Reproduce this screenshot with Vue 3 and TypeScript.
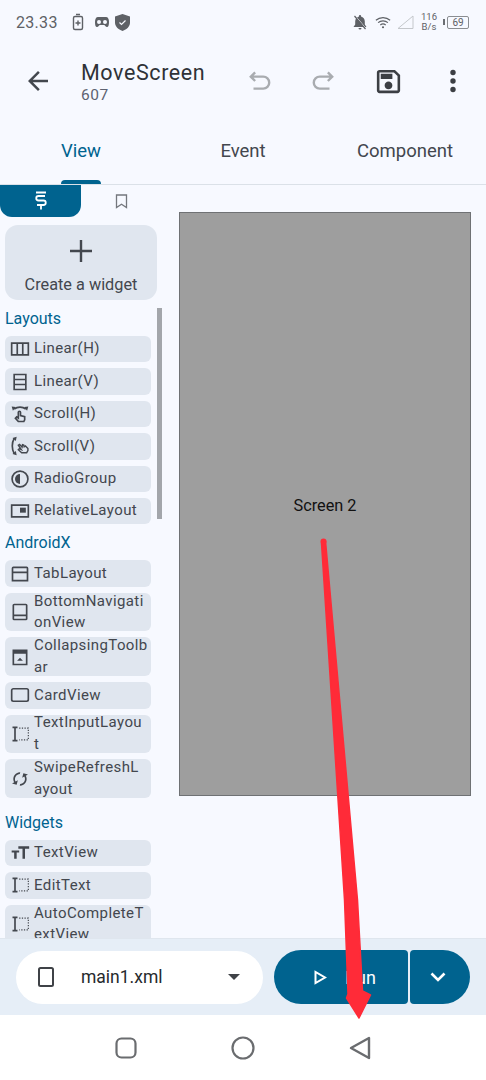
<template>
  <div class="phone">
    <div class="status">
      <span class="clock">23.33</span>
      <svg class="st" width="14" height="18" viewBox="0 0 14 18" fill="none" stroke="currentColor" stroke-width="1.4">
        <rect x="2.5" y="3.5" width="9" height="13" rx="1.5" />
        <path d="M5 1.5h4M7 7.5v5M4.5 10h5" />
      </svg>
      <svg class="st game" width="14" height="10" viewBox="0 0 14 10">
        <path fill="currentColor" fill-rule="evenodd" d="M3 0h8c2 0 3 2 3 5s-.6 5-2 5c-1.500 0-2-2-3-2H5c-1 0-1.500 2-3 2S0 8 0 5s1-5 3-5zm1 3a2 2 0 100 4 2 2 0 000-4zm6 0a2 2 0 100 4 2 2 0 000-4z" />
      </svg>
      <svg class="st" width="15" height="17" viewBox="0 0 15 17">
        <path fill="currentColor" d="M7.500 0L15 2.500v6c0 4-3.200 7-7.500 8.500C3.200 15.500 0 12.500 0 8.500v-6z" />
        <path fill="none" stroke="#f7f9ff" stroke-width="1.2" d="M4.500 8.500l2 2 4-4" />
      </svg>
      <span class="spring"></span>
      <svg width="14" height="15" viewBox="0 0 14 15">
        <path fill="currentColor" d="M7 0c.6 0 1 .4 1 1v.6c2.300.5 3.800 2.400 3.800 4.900v3L13.500 12h-13l1.700-2.500v-3c0-2.500 1.500-4.400 3.800-4.900V1c0-.6.4-1 1-1zM5.500 13h3a1.500 1.500 0 01-3 0z" />
        <path stroke="#f7f9ff" stroke-width="1" d="M2 .5l11 13" />
        <path stroke="currentColor" stroke-width="1.200" d="M1.500 1l11 13" />
      </svg>
      <svg class="wifi" width="16" height="13" viewBox="0 0 18 14" fill="none" stroke="currentColor" stroke-width="1.300">
        <path d="M1 4.500c4.500-4 11.500-4 16 0M3.500 7.200c3-2.700 8-2.700 11 0M6 9.800c1.700-1.400 4.300-1.400 6 0" />
        <circle cx="9" cy="12.300" r="1.200" fill="currentColor" stroke="none" />
      </svg>
      <svg class="signal" width="17" height="14" viewBox="0 0 17 14" fill="none" stroke="#c4c7cb" stroke-width="1">
        <path d="M1 13.500L16 1v12.500z" />
      </svg>
      <span class="speed">116<br />B/s</span>
      <span class="batt-tip"></span>
      <span class="batt">69</span>
    </div>

    <div class="toolbar">
      <svg class="back" width="30" height="30" viewBox="0 0 24 24">
        <path fill="currentColor" d="M20 11H7.830l5.590-5.590L12 4l-8 8 8 8 1.410-1.410L7.830 13H20v-2z" />
      </svg>
      <div class="titles">
        <div class="title">MoveScreen</div>
        <div class="subtitle">607</div>
      </div>
      <svg class="act undo" width="26" height="26" viewBox="0 0 24 24" fill="none" stroke="currentColor" stroke-width="2.200">
        <path d="M7.500 4L3.500 8l4 4M3.500 8H15a5.500 5.500 0 010 11H6" />
      </svg>
      <svg class="act redo" width="26" height="26" viewBox="0 0 24 24" fill="none" stroke="currentColor" stroke-width="2.200">
        <path d="M16.500 4l4 4-4 4M20.500 8H9a5.500 5.500 0 000 11h9" />
      </svg>
      <svg class="act save" width="31" height="31" viewBox="0 0 24 24">
        <path fill="currentColor" d="M17 3H5c-1.110 0-2 .9-2 2v14c0 1.100.89 2 2 2h14c1.100 0 2-.9 2-2V7l-4-4zm2 16H5V5h11.170L19 7.830V19zm-7-7c-1.660 0-3 1.340-3 3s1.340 3 3 3 3-1.340 3-3-1.340-3-3-3zM6 6h9v4H6z" />
      </svg>
      <svg class="act more" width="8" height="24" viewBox="0 0 8 24">
        <circle cx="4" cy="3.500" r="2.700" fill="currentColor" />
        <circle cx="4" cy="12" r="2.700" fill="currentColor" />
        <circle cx="4" cy="20.500" r="2.700" fill="currentColor" />
      </svg>
    </div>

    <div class="tabs">
      <div v-for="(tab, i) in tabs" :key="tab" class="tab" :class="{ active: i === 0 }">{{ tab }}</div>
    </div>

    <div class="main">
      <aside class="side">
        <div class="switch">
          <div class="switch-on">
            <svg width="14" height="20" viewBox="0 0 14 20" fill="none" stroke="currentColor" stroke-width="1.800">
              <path d="M2 1.500h10M11 5H4.500a2.200 2.200 0 000 4.500h5a2.200 2.200 0 010 4.500H3M7 14v4.500" />
            </svg>
          </div>
          <div class="switch-off">
            <svg width="13" height="15" viewBox="0 0 13 15" fill="none" stroke="currentColor" stroke-width="1.300">
              <path d="M1.500 1h10v12.500l-5-3.200-5 3.200z" />
            </svg>
          </div>
        </div>

        <div class="create">
          <svg width="24" height="24" viewBox="0 0 24 24" stroke="currentColor" stroke-width="2.400">
            <path d="M1 12h22M12 1v22" />
          </svg>
          <span>Create a widget</span>
        </div>

        <section v-for="group in groups" :key="group.name" class="group">
          <h3>{{ group.name }}</h3>
          <div v-for="item in group.items" :key="item.name" class="item" :class="{ tall: item.name.includes('\n') }">
            <svg class="ico" width="20" height="20" viewBox="0 0 24 24" v-html="icons[item.icon]"></svg>
            <span class="name">{{ item.name }}</span>
          </div>
        </section>

        <div class="scrollbar"></div>
      </aside>

      <div class="stage">
        <div class="canvas">Screen 2</div>
      </div>
    </div>

    <div class="bottom">
      <div class="picker">
        <svg width="18" height="22" viewBox="0 0 18 22" fill="none" stroke="currentColor" stroke-width="2">
          <rect x="2" y="2" width="14" height="18" rx="1.500" />
        </svg>
        <span class="file">main1.xml</span>
        <span class="caret"></span>
      </div>
      <div class="run">
        <svg width="15" height="15" viewBox="0 0 15 15" fill="none" stroke="currentColor" stroke-width="2">
          <path d="M2.500 2v11l9.500-5.500z" />
        </svg>
        <span>Run</span>
      </div>
      <div class="run-more">
        <svg width="16" height="10" viewBox="0 0 16 10" fill="none" stroke="currentColor" stroke-width="2.600">
          <path d="M1.500 1.500L8 8l6.500-6.500" />
        </svg>
      </div>
    </div>

    <div class="nav">
      <svg width="22" height="22" viewBox="0 0 22 22" fill="none" stroke="currentColor" stroke-width="2.200">
        <rect x="1.500" y="1.500" width="19" height="19" rx="5" />
      </svg>
      <svg width="24" height="24" viewBox="0 0 24 24" fill="none" stroke="currentColor" stroke-width="2.200">
        <circle cx="12" cy="12" r="10.500" />
      </svg>
      <svg width="22" height="24" viewBox="0 0 22 24" fill="none" stroke="currentColor" stroke-width="2.400" stroke-linejoin="round">
        <path d="M2 12L20 2v20z" />
      </svg>
    </div>

    <!-- annotation drawn on top of the screenshot -->
    <svg class="annotation" width="486" height="1080" viewBox="0 0 486 1080">
      <path
        d="M321.500 543L344.500 900L348 994L346.500 998L359 1018L370.500 995L362.500 991L357.500 900L325.500 541z"
        fill="#ff2b38"
        stroke="#ff2b38"
        stroke-width="1.500"
        stroke-linejoin="round"
      />
      <circle cx="323.500" cy="541.500" r="3" fill="#ff2b38" />
    </svg>
  </div>
</template>

<script setup lang="ts">
type IconName =
  | 'columns' | 'rows' | 'scrollH' | 'scrollV' | 'radio' | 'relative' | 'tab'
  | 'bottomNav' | 'toolbar' | 'card' | 'input' | 'swipe' | 'text'

interface Item {
  name: string
  icon: IconName
}

const tabs = ['View', 'Event', 'Component']

const line = 'fill="none" stroke="currentColor" stroke-width="2"'
const inputIcon = `<path ${line} d="M3 4h6M3 20h6M6 4v16" /><path fill="none" stroke="currentColor" stroke-width="1.400" stroke-dasharray="1.500 1.700" d="M11 5h11v14H11" />`

const icons: Record<IconName, string> = {
  columns: `<path ${line} d="M2 5h20v14H2zM8.700 5v14M15.300 5v14" />`,
  rows: `<path ${line} d="M5 3h14v18H5zM5 9h14M5 15h14" />`,
  scrollH: `<path ${line} d="M5 6c4-3 10-3 14 0M10 21l-3.500-4 1.500-1.500 2 1.500V10a1.300 1.300 0 012.600 0v4l5 1.200V19l-1 2z" /><path fill="currentColor" d="M2 3l5 .5L3.500 8zM22 3l-5 .5L20.500 8z" />`,
  scrollV: `<path ${line} d="M5 3C2 8 2 16 5 21" /><path fill="none" stroke="currentColor" stroke-width="1.700" d="M14 20l-4-3.500 1.300-1.300 2.200 1L10 11l1.500-1 3 3.500.5-3 1.500.5.500 2 1.500-1 3 3v2.500L20 20z" /><path fill="currentColor" d="M8 1L7 6 3 2.500zM8 23l-1-5-4 3.500z" />`,
  radio: `<circle ${line} cx="12" cy="12" r="9.500" /><path fill="currentColor" d="M12 6a6 6 0 000 12z" />`,
  relative: `<path ${line} d="M2 5h20v14H2z" /><path fill="currentColor" d="M12 8h7v6h-7z" />`,
  tab: `<path ${line} d="M4 4h16a1 1 0 011 1v15H3V5a1 1 0 011-1zM3 10h18" />`,
  bottomNav: `<path ${line} d="M5 3h14a1 1 0 011 1v16a1 1 0 01-1 1H5a1 1 0 01-1-1V4a1 1 0 011-1zM4 16h16" />`,
  toolbar: `<path ${line} d="M4 4h16v17H4z" /><path fill="currentColor" d="M4 4h16v4H4zM12 13l3.500 3.500h-7z" />`,
  card: `<path ${line} d="M4 4.500h16a2 2 0 012 2v11a2 2 0 01-2 2H4a2 2 0 01-2-2v-11a2 2 0 012-2z" />`,
  input: inputIcon,
  swipe: `<path transform="rotate(60 12 12)" fill="currentColor" d="M12 4V1L8 5l4 4V6c3.310 0 6 2.690 6 6 0 1.010-.25 1.970-.7 2.800l1.460 1.460C19.540 15.030 20 13.570 20 12c0-4.420-3.580-8-8-8zm0 14c-3.310 0-6-2.690-6-6 0-1.010.25-1.970.7-2.800L5.240 7.740C4.460 8.970 4 10.430 4 12c0 4.420 3.580 8 8 8v3l4-4-4-4v3z" />`,
  text: `<path fill="currentColor" d="M2 9h9v2.500H8V19H5v-7.500H2zM10 4h13v3h-5v12h-3V7h-5z" />`
}

// \n marks where the long names break in the narrow palette
const groups: { name: string; items: Item[] }[] = [
  {
    name: 'Layouts',
    items: [
      { name: 'Linear(H)', icon: 'columns' },
      { name: 'Linear(V)', icon: 'rows' },
      { name: 'Scroll(H)', icon: 'scrollH' },
      { name: 'Scroll(V)', icon: 'scrollV' },
      { name: 'RadioGroup', icon: 'radio' },
      { name: 'RelativeLayout', icon: 'relative' }
    ]
  },
  {
    name: 'AndroidX',
    items: [
      { name: 'TabLayout', icon: 'tab' },
      { name: 'BottomNavigati\nonView', icon: 'bottomNav' },
      { name: 'CollapsingToolb\nar', icon: 'toolbar' },
      { name: 'CardView', icon: 'card' },
      { name: 'TextInputLayou\nt', icon: 'input' },
      { name: 'SwipeRefreshL\nayout', icon: 'swipe' }
    ]
  },
  {
    name: 'Widgets',
    items: [
      { name: 'TextView', icon: 'text' },
      { name: 'EditText', icon: 'input' },
      { name: 'AutoCompleteT\nextView', icon: 'input' }
    ]
  }
]
</script>

<style>
html,
body {
  margin: 0;
  background: #f7f9ff;
}
</style>

<style scoped>
.phone {
  position: relative;
  width: 486px;
  height: 1080px;
  overflow: hidden;
  display: flex;
  flex-direction: column;
  background: #f7f9ff;
  color: #43474e;
  font-family: Roboto, "Noto Sans", sans-serif;
}

.status {
  height: 44px;
  flex: none;
  display: flex;
  align-items: center;
  padding: 0 17px 0 16px;
  box-sizing: border-box;
  color: #5e6166;
}

.clock {
  font-size: 16px;
  letter-spacing: 0.3px;
  margin-right: 13px;
}

.st {
  margin-right: 10px;
}

.st.game {
  margin-right: 6px;
}

.spring {
  flex: 1;
}

.wifi {
  margin-left: 8px;
}

.signal {
  margin-left: 6px;
}

.speed {
  font-size: 9.5px;
  line-height: 10px;
  margin-left: 7px;
  text-align: center;
}

.batt-tip {
  width: 2px;
  height: 6px;
  margin-left: 6px;
  background: #6b6e73;
}

.batt {
  width: 20px;
  height: 11px;
  margin-left: 2px;
  border: 1px solid #8a8d91;
  border-radius: 2px;
  font-size: 10px;
  line-height: 11px;
  text-align: center;
}

.toolbar {
  height: 80px;
  flex: none;
  display: flex;
  align-items: center;
  box-sizing: border-box;
  padding-left: 23px;
}

.back {
  margin-top: -6px;
}

.titles {
  width: 166px;
  margin-left: 28px;
  margin-top: -5px;
}

.title {
  font-size: 21.5px;
  line-height: 26px;
  letter-spacing: 0.6px;
  color: #2f3237;
}

.subtitle {
  font-size: 15.5px;
  line-height: 18px;
  letter-spacing: 0.5px;
  color: #5d6271;
}

.act {
  flex: none;
  margin-top: -6px;
}

.undo,
.redo {
  color: #a9acb0;
}

.redo {
  margin-left: 37px;
}

.save {
  margin-left: 37px;
  color: #3c3f44;
}

.more {
  margin-left: 45px;
  color: #3c3f44;
}

.tabs {
  height: 61px;
  flex: none;
  display: grid;
  grid-template-columns: repeat(3, 1fr);
  box-sizing: border-box;
  border-bottom: 1px solid #dbe1e8;
}

.tab {
  position: relative;
  text-align: center;
  font-size: 18.5px;
  line-height: 54px;
}

.tab.active {
  color: #00638f;
}

.tab.active::after {
  content: "";
  position: absolute;
  left: 61px;
  bottom: 0;
  width: 40px;
  height: 4px;
  border-radius: 4px 4px 0 0;
  background: #00638f;
}

.main {
  flex: 1;
  min-height: 0;
  display: flex;
}

.side {
  position: relative;
  width: 162px;
  flex: none;
  overflow: hidden;
}

.switch {
  height: 32px;
  display: flex;
}

.switch-on,
.switch-off {
  width: 81px;
  display: flex;
  align-items: center;
  justify-content: center;
}

.switch-on {
  background: #00638f;
  color: #fff;
  border-radius: 0 0 12px 12px;
}

.switch-off {
  color: #74777d;
}

.create {
  height: 75px;
  width: 152px;
  margin: 8px 0 0 5px;
  padding-top: 14px;
  box-sizing: border-box;
  display: flex;
  flex-direction: column;
  align-items: center;
  gap: 12px;
  background: #e0e6ef;
  border-radius: 13px;
  font-size: 16.3px;
}

.group h3 {
  margin: 0 0 0 5px;
  height: 36px;
  font-size: 16px;
  font-weight: 400;
  line-height: 37px;
  color: #00638f;
}

/* the first rows of AndroidX sit closer to the group above */
.group:nth-of-type(2) {
  margin-top: -6px;
}

.item {
  width: 146px;
  height: 26.4px;
  margin: 0 0 6px 5px;
  padding-left: 5px;
  box-sizing: border-box;
  display: flex;
  align-items: center;
  gap: 4px;
  background: #e0e6ef;
  border-radius: 6px;
  letter-spacing: 0.4px;
  font-size: 15px;
}

.item.tall {
  height: 38.7px;
}

.ico {
  flex: none;
}

.name {
  line-height: 21.5px;
  white-space: pre;
}

.scrollbar {
  position: absolute;
  right: 0;
  top: 123px;
  width: 5px;
  height: 211px;
  background: #a3a6ab;
}

.stage {
  flex: 1;
  padding: 27px 15px 0 17px;
}

.canvas {
  height: 584px;
  box-sizing: border-box;
  display: flex;
  align-items: center;
  justify-content: center;
  background: #9e9e9e;
  border: 1px solid #6f7174;
  color: #111;
  font-size: 16.3px;
  padding-top: 2px;
}

.bottom {
  height: 77px;
  flex: none;
  display: flex;
  align-items: center;
  box-sizing: border-box;
  padding: 0 16px;
  background: #e6eef7;
  border-top: 1px solid #dfe6ee;
}

.picker {
  width: 247px;
  height: 53px;
  box-sizing: border-box;
  padding-left: 21px;
  display: flex;
  align-items: center;
  background: #fff;
  border-radius: 27px;
  color: #3f4247;
}

.file {
  margin-left: 26px;
  width: 147px;
  font-size: 17.5px;
  color: #26292d;
}

.caret {
  border: 6px solid transparent;
  border-top-color: #3f4247;
  border-bottom-width: 0;
}

.run {
  width: 134px;
  height: 54px;
  margin-left: 11px;
  box-sizing: border-box;
  padding-left: 39px;
  display: flex;
  align-items: center;
  gap: 17px;
  background: #00638f;
  border-radius: 27px 4px 4px 27px;
  color: #fff;
  font-size: 18px;
}

.run-more {
  width: 60px;
  height: 54px;
  margin-left: 2px;
  padding-right: 4px;
  box-sizing: border-box;
  display: flex;
  align-items: center;
  justify-content: center;
  background: #00638f;
  border-radius: 4px 27px 27px 4px;
  color: #fff;
}

.nav {
  height: 65px;
  flex: none;
  display: grid;
  grid-template-columns: repeat(3, 117px);
  justify-content: center;
  justify-items: center;
  align-items: center;
  background: #fff;
  color: #6a6c6f;
}

.annotation {
  position: absolute;
  left: 0;
  top: 0;
  pointer-events: none;
}
</style>
